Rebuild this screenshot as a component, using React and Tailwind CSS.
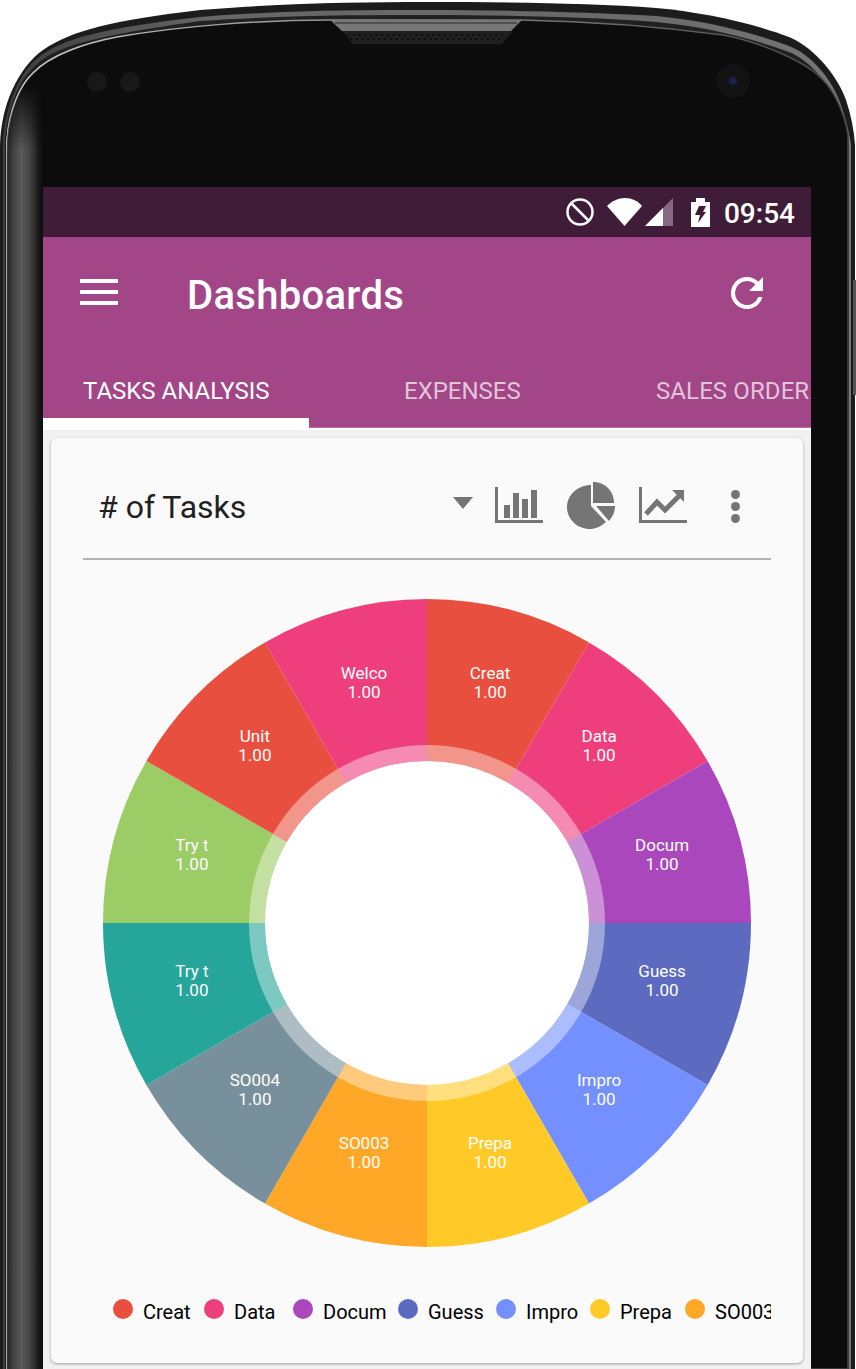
const ROBOTO = { fontFamily: 'Roboto, sans-serif' };

const SLICES = [
  { label: 'Creat', color: '#e94f3f', width: 91 },
  { label: 'Data', color: '#ee3f7c', width: 89 },
  { label: 'Docum', color: '#ab47bc', width: 105 },
  { label: 'Guess', color: '#5c6bc0', width: 98 },
  { label: 'Impro', color: '#7490ff', width: 94 },
  { label: 'Prepa', color: '#ffca28', width: 95 },
  { label: 'SO003', color: '#ffa726', width: 90 },
  { label: 'SO004', color: '#78909c' },
  { label: 'Try t', color: '#26a69a' },
  { label: 'Try t', color: '#9ccc65' },
  { label: 'Unit', color: '#e94f3f' },
  { label: 'Welco', color: '#ee3f7c' },
];

const OUTER = 'M0 1369V145C1 105 18 68 43 50C72 30 115 20 200 10C290 3 360 2 427 2C500 2 590 3 656 8C700 12 750 22 789 37C809 45 835 70 846 100C851 115 854 130 855 145V1369Z';
const MID = 'M3 1369V142C5 105 20 72 38 58C62 38 105 28 200 17C290 10 360 10 427 10C500 10 590 12 656 16C700 20 745 30 789 46C810 54 832 78 841 105C846 120 850 135 851 145V1369Z';
const INNER = 'M7 1369V140C9 110 20 85 33 73C50 55 85 43 117 37C180 26 260 20 330 20H520C570 21 640 24 723 35C750 40 770 48 789 57C805 65 818 74 823 80C835 92 845 115 848 135V1369Z';

const GRILLE = [];
for (let i = 0; i < 28; i++) {
  GRILLE.push([348 + i * 5.7, 35]);
  if (i < 27) GRILLE.push([351 + i * 5.7, 39]);
}

function polar(r, deg) {
  const a = (deg * Math.PI) / 180;
  return [r * Math.sin(a), -r * Math.cos(a)];
}

function ringPath(r0, r1, from, to) {
  const [ax, ay] = polar(r1, from);
  const [bx, by] = polar(r1, to);
  const [cx, cy] = polar(r0, to);
  const [dx, dy] = polar(r0, from);
  return `M${ax} ${ay}A${r1} ${r1} 0 0 1 ${bx} ${by}L${cx} ${cy}A${r0} ${r0} 0 0 0 ${dx} ${dy}Z`;
}

function PhoneFrame() {
  return (
    <svg className="absolute top-0 left-0" width="856" height="1369" viewBox="0 0 856 1369">
      <defs>
        <linearGradient id="sideL" x1="0" x2="43" y1="0" y2="0" gradientUnits="userSpaceOnUse">
          <stop offset="0" stopColor="#0b0b0b" stopOpacity="0" />
          <stop offset="0.2" stopColor="#2a2a2a" />
          <stop offset="0.32" stopColor="#444" />
          <stop offset="0.5" stopColor="#5a5a5a" />
          <stop offset="0.7" stopColor="#444" />
          <stop offset="0.88" stopColor="#1c1c1c" />
          <stop offset="1" stopColor="#0b0b0b" />
        </linearGradient>
        <linearGradient id="sideFade" x1="0" x2="0" y1="85" y2="150" gradientUnits="userSpaceOnUse">
          <stop offset="0" stopColor="white" stopOpacity="0" />
          <stop offset="1" stopColor="white" stopOpacity="1" />
        </linearGradient>
        <mask id="sideMask">
          <rect x="0" y="0" width="50" height="1369" fill="url(#sideFade)" />
        </mask>
        <linearGradient id="rim" x1="0" x2="856" y1="0" y2="0" gradientUnits="userSpaceOnUse">
          <stop offset="0" stopColor="#3c3c3c" />
          <stop offset="0.25" stopColor="#666" />
          <stop offset="0.75" stopColor="#6a6a6a" />
          <stop offset="1" stopColor="#777" />
        </linearGradient>
        <linearGradient id="edge" x1="0" x2="856" y1="0" y2="0" gradientUnits="userSpaceOnUse">
          <stop offset="0" stopColor="#d8d8d8" />
          <stop offset="0.2" stopColor="#aaa" />
          <stop offset="0.6" stopColor="#777" />
          <stop offset="1" stopColor="#444" />
        </linearGradient>
        <clipPath id="body">
          <path d={INNER} />
        </clipPath>
      </defs>
      <path d={OUTER} fill="#1c1c1c" />
      <path d={MID} fill="url(#rim)" />
      <path d="M5 1369V141C7 108 20 78 36 65C56 46 95 36 200 21C290 15 360 15 427 15C500 15 590 17 656 22C700 26 745 36 789 52C808 60 826 78 838 108C843 122 848 135 849 145V1369Z" fill="#202020" />
      <path d={INNER} fill="#0c0c0c" stroke="url(#edge)" strokeWidth="1.5" />
      <g clipPath="url(#body)">
        <rect x="0" y="85" width="43" height="1284" fill="url(#sideL)" mask="url(#sideMask)" />
      </g>
      <rect x="853" y="280" width="3" height="115" fill="#555" />
      <path d="M330 20L342 31H511L522 20Z" fill="#777" />
      <path d="M335 23H517" stroke="#2a2a2a" strokeWidth="1" />
      <path d="M342 31L353 44H502L513 31Z" fill="#202020" />
      {GRILLE.map(([x, y], i) => (
        <circle key={i} cx={x} cy={y} r="0.9" fill="#050505" />
      ))}
      <circle cx="97" cy="82" r="10" fill="#181818" />
      <circle cx="130" cy="82" r="10" fill="#181818" />
      <circle cx="733" cy="81" r="17" fill="#131313" />
      <circle cx="733" cy="81" r="4" fill="#1e1e4c" />
    </svg>
  );
}

function StatusBar() {
  return (
    <div className="h-[50px] bg-[#3f1d38] flex items-center justify-end pr-[16px] text-white">
      <svg width="30" height="30" viewBox="0 0 30 30" fill="none" stroke="white" strokeWidth="2.5">
        <circle cx="15" cy="15" r="12.5" />
        <path d="M6.5 6.5L23.5 23.5" />
      </svg>
      <svg className="ml-[12px]" width="36" height="28" viewBox="0 0 36 28" fill="white">
        <path d="M0 8C5 3 11 0 18 0C25 0 31 3 35 8L17.5 28Z" />
      </svg>
      <svg className="ml-[2px]" width="28" height="28" viewBox="0 0 28 28">
        <path d="M0 28L28 0V28Z" fill="#866881" />
        <path d="M0 28L18 10V28Z" fill="white" />
      </svg>
      <svg className="ml-[18px]" width="19" height="29" viewBox="0 0 19 29">
        <path d="M5 0H14V4H19V29H0V4H5Z" fill="white" />
        <path d="M8 8H15L12 14H15L7 25L9 17H4Z" fill="#3f1d38" />
      </svg>
      <span style={ROBOTO} className="ml-[14px] mt-[4px] text-[28px] font-medium leading-none">09:54</span>
    </div>
  );
}

function AppBar() {
  return (
    <div className="h-[120px] bg-[#a24687] flex items-start text-white">
      <div className="ml-[37px] mt-[42px] w-[38px] flex flex-col gap-[7px]">
        <span className="block h-[4px] bg-white" />
        <span className="block h-[4px] bg-white" />
        <span className="block h-[4px] bg-white" />
      </div>
      <h1 style={ROBOTO} className="ml-[69px] mt-[36px] text-[40px] tracking-[0.3px] font-medium leading-[46px]">Dashboards</h1>
      <svg className="ml-auto mr-[40px] mt-[32px]" width="48" height="48" viewBox="0 0 24 24" fill="white">
        <path d="M17.65 6.35A7.96 7.96 0 0 0 12 4a8 8 0 1 0 7.73 10h-2.08A6 6 0 1 1 12 6c1.66 0 3.14.69 4.22 1.78L13 11h7V4z" />
      </svg>
    </div>
  );
}

function Tabs() {
  return (
    <div style={ROBOTO} className="bg-[#a24687] flex text-[24px] overflow-hidden whitespace-nowrap">
      <div className="w-[266px] shrink-0 h-[71px] border-b-[10px] border-white text-white pl-[40px] pt-[16px]">TASKS ANALYSIS</div>
      <div className="w-[347px] shrink-0 h-[71px] border-b border-[#b56da0] text-white/70 pl-[95px] pt-[16px]">EXPENSES</div>
      <div className="flex-1 h-[71px] border-b border-[#b56da0] text-white/70 pt-[16px] tracking-[0.1px]">SALES ORDER</div>
    </div>
  );
}

function ChartIcons() {
  return (
    <div className="flex items-start h-[47px] mt-[-4px]">
      <svg className="mt-[15px]" width="20" height="12" viewBox="0 0 20 12" fill="#757575">
        <path d="M0 0H20L10 12Z" />
      </svg>
      <svg className="ml-[22px] mt-[5px]" width="48" height="36" viewBox="0 0 48 36" fill="#757575">
        <path d="M0 0H3V33H48V36H0Z" />
        <path d="M9 18H15V31H9ZM18 6H24V31H18ZM27 12H33V31H27ZM36 3H42V31H36Z" />
      </svg>
      <svg className="ml-[24px]" width="50" height="48" viewBox="0 0 50 48" fill="#757575">
        <path d="M24 3V24L39 40C33 45 28 47 23 47C10 47 0 37 0 25C0 13 11 3 24 3Z" />
        <path d="M26 0C39 0 47 10 47 21H26Z" />
        <path d="M29 24H48C48 30 46 34 42 39Z" />
      </svg>
      <svg className="ml-[22px] mt-[5px]" width="48" height="36" viewBox="0 0 48 36" fill="#757575">
        <path d="M0 0H3V33H48V36H0Z" />
        <path d="M7 27L18 15L26 23L42 7" fill="none" stroke="#757575" strokeWidth="5" />
        <path d="M33 3H45V15Z" />
      </svg>
      <div className="ml-[44px] mr-[31px] mt-[8px] flex flex-col gap-[3px]">
        <span className="block w-[9px] h-[9px] rounded-full bg-[#757575]" />
        <span className="block w-[9px] h-[9px] rounded-full bg-[#757575]" />
        <span className="block w-[9px] h-[9px] rounded-full bg-[#757575]" />
      </div>
    </div>
  );
}

function Donut() {
  return (
    <svg className="block" width="648" height="648" viewBox="-324 -324 648 648" style={ROBOTO}>
      <circle r="163" fill="white" />
      {SLICES.map((s, i) => (
        <g key={i}>
          <path d={ringPath(162, 324, i * 30, (i + 1) * 30)} fill={s.color} />
          <path d={ringPath(162, 178, i * 30, (i + 1) * 30)} fill="white" fillOpacity="0.4" />
        </g>
      ))}
      {SLICES.map((s, i) => {
        const [x, y] = polar(243.4, i * 30 + 15);
        return (
          <text key={i} x={x} textAnchor="middle" fill="white" fontSize="17">
            <tspan x={x} y={y - 9}>{s.label}</tspan>
            <tspan x={x} y={y + 10}>1.00</tspan>
          </text>
        );
      })}
    </svg>
  );
}

function Legend() {
  return (
    <div style={ROBOTO} className="mt-[52px] ml-[62px] w-[658px] overflow-hidden whitespace-nowrap flex text-[20px] text-black leading-[24px]">
      {SLICES.slice(0, 7).map((s, i) => (
        <div key={i} className="flex items-start shrink-0" style={{ width: s.width }}>
          <span className="block w-[20px] h-[20px] rounded-full mr-[10px]" style={{ backgroundColor: s.color }} />
          <span className="mt-[1px]">{s.label}</span>
        </div>
      ))}
    </div>
  );
}

export default function App() {
  return (
    <div className="relative w-[856px] h-[1369px] overflow-hidden bg-white">
      <PhoneFrame />
      <div className="relative ml-[43px] pt-[187px] w-[768px]">
        <StatusBar />
        <AppBar />
        <Tabs />
        <div className="h-[2px] bg-white" />
        <div className="bg-[#f1f1f1] h-[939px] px-[8px] pt-[8px]">
          <div className="bg-[#fafafa] rounded-[6px] h-[925px] shadow-[0_1px_3px_rgba(0,0,0,0.35)]">
            <div className="mx-[32px] h-[122px] pt-[18px] border-b-2 border-[#b3b3b3] flex items-center justify-between">
              <span style={ROBOTO} className="ml-[16px] text-[32px] text-[#212121] -translate-x-px">
                # of Tasks
              </span>
              <ChartIcons />
            </div>
            <div className="mt-[39px] ml-[52px]">
              <Donut />
            </div>
            <Legend />
          </div>
        </div>
      </div>
    </div>
  );
}
